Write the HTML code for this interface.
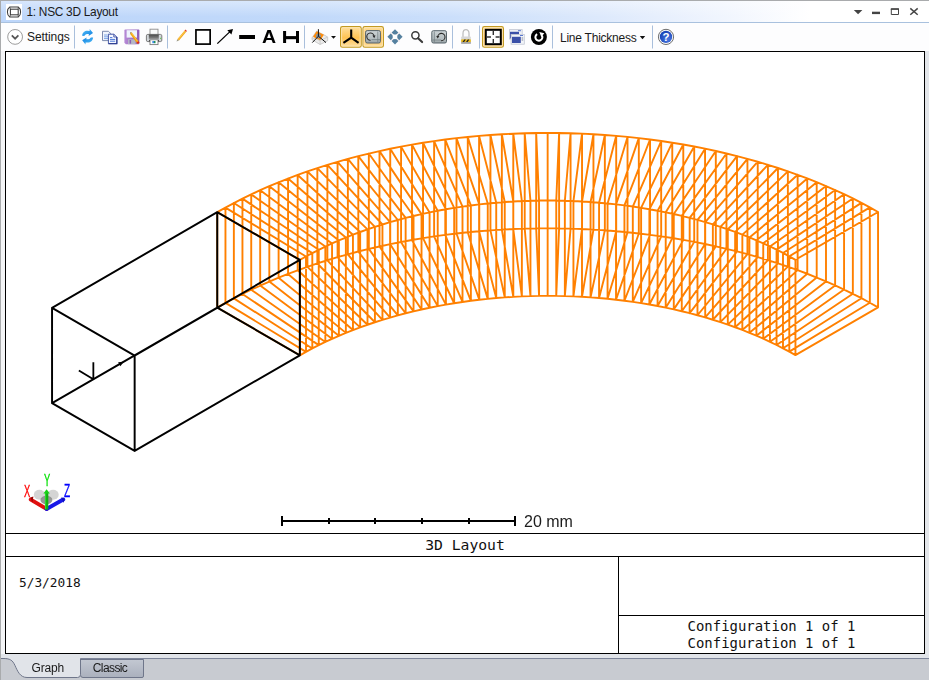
<!DOCTYPE html>
<html>
<head>
<meta charset="utf-8">
<title>1: NSC 3D Layout</title>
<style>
html,body{margin:0;padding:0;}
body{width:929px;height:680px;overflow:hidden;background:#fff;position:relative;font-family:"Liberation Sans",sans-serif;}
#win{position:absolute;left:0;top:0;width:929px;height:680px;overflow:hidden;background:#fff;}
#title{position:absolute;left:0;top:0;width:929px;height:22px;border-top:1px solid #a9abad;box-sizing:border-box;
 background:linear-gradient(to right,#bdd6fa 0px,#c1d9fa 300px,#cbdffb 450px,#dde9fc 600px,#f0f5fe 720px,#ffffff 810px);}
#title .shade{position:absolute;left:0;top:0;width:100%;height:21px;background:linear-gradient(to bottom,rgba(255,255,255,.4),rgba(255,255,255,0) 75%);}
#titleline{position:absolute;left:0;top:22px;width:929px;height:1px;background:#a9c1de;}
#ttext{position:absolute;left:26.5px;top:5px;font-size:11.9px;line-height:15px;color:#1a1a1a;white-space:nowrap;letter-spacing:-0.29px;}
#toolbar{position:absolute;left:0;top:23px;width:929px;height:28px;background:#fdfdfe;}
.tb{position:absolute;font-size:12px;line-height:15px;color:#1a1a1a;white-space:nowrap;}
#lborder{position:absolute;left:0;top:0;width:1px;height:680px;background:#a9abad;}
#rstrip{position:absolute;left:925px;top:51px;width:4px;height:607px;background:#e3e6ea;}
#lstrip{position:absolute;left:1px;top:51px;width:4px;height:607px;background:#f4f5f7;}
#bstrip{position:absolute;left:1px;top:654px;width:928px;height:4px;background:#e1e4e9;}
#tabs{position:absolute;left:0;top:658px;width:929px;height:22px;background:#c8cbd1;border-top:1px solid #7d859a;box-sizing:border-box;}
.mono{position:absolute;font-family:"DejaVu Sans Mono","Liberation Mono",monospace;color:#111;white-space:pre;}
svg{position:absolute;left:0;top:0;}
svg text{font-family:"Liberation Sans",sans-serif;}
.tabtxt{position:absolute;font-size:12px;line-height:15px;color:#1a1a1a;}
</style>
</head>
<body>
<div id="win">
 <div id="title"><div class="shade"></div></div>
 <div id="titleline"></div>
 <div id="ttext">1: NSC 3D Layout</div>
 <div id="toolbar"></div>
 <div class="tb" id="settings" style="left:27px;top:30px;letter-spacing:-0.08px;">Settings</div>
 <div class="tb" id="lthick" style="left:560px;top:31px;letter-spacing:-0.24px;">Line Thickness</div>
 <div id="lstrip"></div><div id="rstrip"></div><div id="bstrip"></div>
 <div id="tabs"></div>
 <div id="lborder"></div>

 <div class="mono" id="t3d" style="left:5px;width:920px;top:535.5px;text-align:center;font-size:14.7px;line-height:18px;">3D Layout</div>
 <div class="mono" id="tdate" style="left:19px;top:575px;font-size:12.8px;line-height:16px;">5/3/2018</div>
 <div class="mono" id="tc1" style="left:619px;width:305px;top:618.4px;text-align:center;font-size:13.95px;line-height:17px;">Configuration 1 of 1</div>
 <div class="mono" id="tc2" style="left:619px;width:305px;top:635.4px;text-align:center;font-size:13.95px;line-height:17px;">Configuration 1 of 1</div>

 <svg width="929" height="680" viewBox="0 0 929 680">
  <!-- frame -->
  <g fill="none" stroke="#000" stroke-width="1" shape-rendering="crispEdges">
   <rect x="5.5" y="51.5" width="919" height="602"/>
   <path d="M5 533.5H925M5 556.5H925M618.5 556V654M618 615.5H925"/>
  </g>
  
<path d="M217.25 212.20L225.46 207.57L233.86 203.05L242.45 198.65L251.23 194.38L260.18 190.23L269.31 186.21L278.60 182.32L288.06 178.57L297.67 174.95L307.43 171.47L317.34 168.12L327.39 164.92L337.57 161.86L347.87 158.95L358.30 156.19L368.84 153.57L379.49 151.10L390.24 148.79L401.08 146.63L412.01 144.62L423.03 142.77L434.12 141.08L445.27 139.54L456.49 138.16L467.77 136.95L479.09 135.89L490.45 134.99L501.85 134.26L513.28 133.69L524.72 133.28L536.18 133.03L547.65 132.94L559.12 133.02L570.58 133.26L582.02 133.67L593.45 134.23L604.85 134.96L616.21 135.85L627.53 136.90L638.81 138.11L650.03 139.48L661.18 141.01L672.27 142.70L683.29 144.54L694.22 146.54L705.06 148.69L715.81 151.00L726.46 153.46L737.00 156.07L747.43 158.83L757.73 161.74L767.91 164.79L777.96 167.98L787.87 171.32L797.63 174.80L807.24 178.41L816.70 182.16L825.99 186.04L835.12 190.06L844.07 194.20L852.85 198.47L861.44 202.86L869.84 207.37L878.05 212.00M217.25 307.55L225.46 302.92L233.86 298.40L242.45 294.00L251.23 289.73L260.18 285.58L269.31 281.56L278.60 277.67L288.06 273.92L297.67 270.30L307.43 266.82L317.34 263.47L327.39 260.27L337.57 257.21L347.87 254.30L358.30 251.54L368.84 248.92L379.49 246.45L390.24 244.14L401.08 241.98L412.01 239.97L423.03 238.12L434.12 236.43L445.27 234.89L456.49 233.51L467.77 232.30L479.09 231.24L490.45 230.34L501.85 229.61L513.28 229.04L524.72 228.63L536.18 228.38L547.65 228.29L559.12 228.37L570.58 228.61L582.02 229.02L593.45 229.58L604.85 230.31L616.21 231.20L627.53 232.25L638.81 233.46L650.03 234.83L661.18 236.36L672.27 238.05L683.29 239.89L694.22 241.89L705.06 244.04L715.81 246.35L726.46 248.81L737.00 251.42L747.43 254.18L757.73 257.09L767.91 260.14L777.96 263.33L787.87 266.67L797.63 270.15L807.24 273.76L816.70 277.51L825.99 281.39L835.12 285.41L844.07 289.55L852.85 293.82L861.44 298.21L869.84 302.72L878.05 307.35M299.85 259.95L306.01 256.47L312.31 253.09L318.75 249.79L325.33 246.58L332.05 243.47L338.89 240.46L345.86 237.54L352.95 234.73L360.16 232.01L367.49 229.40L374.92 226.89L382.45 224.49L390.09 222.20L397.82 220.01L405.64 217.94L413.54 215.98L421.53 214.13L429.59 212.39L437.72 210.77L445.92 209.27L454.18 207.88L462.50 206.61L470.87 205.46L479.28 204.42L487.74 203.51L496.23 202.72L504.75 202.05L513.30 201.49L521.87 201.06L530.45 200.76L539.05 200.57L547.65 200.51L556.25 200.57L564.85 200.75L573.43 201.05L582.00 201.47L590.55 202.02L599.07 202.69L607.56 203.47L616.02 204.38L624.43 205.41L632.80 206.56L641.12 207.82L649.38 209.20L657.58 210.70L665.71 212.32L673.77 214.05L681.76 215.90L689.66 217.85L697.48 219.92L705.21 222.10L712.85 224.39L720.38 226.79L727.81 229.29L735.14 231.90L742.35 234.61L749.44 237.42L756.41 240.33L763.25 243.34L769.97 246.45L776.55 249.65L782.99 252.94L789.29 256.33L795.45 259.80M299.85 355.30L306.01 351.82L312.31 348.44L318.75 345.14L325.33 341.93L332.05 338.82L338.89 335.81L345.86 332.89L352.95 330.08L360.16 327.36L367.49 324.75L374.92 322.24L382.45 319.84L390.09 317.55L397.82 315.36L405.64 313.29L413.54 311.33L421.53 309.48L429.59 307.74L437.72 306.12L445.92 304.62L454.18 303.23L462.50 301.96L470.87 300.81L479.28 299.77L487.74 298.86L496.23 298.07L504.75 297.40L513.30 296.84L521.87 296.41L530.45 296.11L539.05 295.92L547.65 295.86L556.25 295.92L564.85 296.10L573.43 296.40L582.00 296.82L590.55 297.37L599.07 298.04L607.56 298.82L616.02 299.73L624.43 300.76L632.80 301.91L641.12 303.17L649.38 304.55L657.58 306.05L665.71 307.67L673.77 309.40L681.76 311.25L689.66 313.20L697.48 315.27L705.21 317.45L712.85 319.74L720.38 322.14L727.81 324.64L735.14 327.25L742.35 329.96L749.44 332.77L756.41 335.68L763.25 338.69L769.97 341.80L776.55 345.00L782.99 348.29L789.29 351.68L795.45 355.15M217.25 212.20L299.85 259.95L299.85 355.30L217.25 307.55ZM225.46 207.57L306.01 256.47L306.01 351.82L225.46 302.92ZM233.86 203.05L312.31 253.09L312.31 348.44L233.86 298.40ZM242.45 198.65L318.75 249.79L318.75 345.14L242.45 294.00ZM251.23 194.38L325.33 246.58L325.33 341.93L251.23 289.73ZM260.18 190.23L332.05 243.47L332.05 338.82L260.18 285.58ZM269.31 186.21L338.89 240.46L338.89 335.81L269.31 281.56ZM278.60 182.32L345.86 237.54L345.86 332.89L278.60 277.67ZM288.06 178.57L352.95 234.73L352.95 330.08L288.06 273.92ZM297.67 174.95L360.16 232.01L360.16 327.36L297.67 270.30ZM307.43 171.47L367.49 229.40L367.49 324.75L307.43 266.82ZM317.34 168.12L374.92 226.89L374.92 322.24L317.34 263.47ZM327.39 164.92L382.45 224.49L382.45 319.84L327.39 260.27ZM337.57 161.86L390.09 222.20L390.09 317.55L337.57 257.21ZM347.87 158.95L397.82 220.01L397.82 315.36L347.87 254.30ZM358.30 156.19L405.64 217.94L405.64 313.29L358.30 251.54ZM368.84 153.57L413.54 215.98L413.54 311.33L368.84 248.92ZM379.49 151.10L421.53 214.13L421.53 309.48L379.49 246.45ZM390.24 148.79L429.59 212.39L429.59 307.74L390.24 244.14ZM401.08 146.63L437.72 210.77L437.72 306.12L401.08 241.98ZM412.01 144.62L445.92 209.27L445.92 304.62L412.01 239.97ZM423.03 142.77L454.18 207.88L454.18 303.23L423.03 238.12ZM434.12 141.08L462.50 206.61L462.50 301.96L434.12 236.43ZM445.27 139.54L470.87 205.46L470.87 300.81L445.27 234.89ZM456.49 138.16L479.28 204.42L479.28 299.77L456.49 233.51ZM467.77 136.95L487.74 203.51L487.74 298.86L467.77 232.30ZM479.09 135.89L496.23 202.72L496.23 298.07L479.09 231.24ZM490.45 134.99L504.75 202.05L504.75 297.40L490.45 230.34ZM501.85 134.26L513.30 201.49L513.30 296.84L501.85 229.61ZM513.28 133.69L521.87 201.06L521.87 296.41L513.28 229.04ZM524.72 133.28L530.45 200.76L530.45 296.11L524.72 228.63ZM536.18 133.03L539.05 200.57L539.05 295.92L536.18 228.38ZM547.65 132.94L547.65 200.51L547.65 295.86L547.65 228.29ZM559.12 133.02L556.25 200.57L556.25 295.92L559.12 228.37ZM570.58 133.26L564.85 200.75L564.85 296.10L570.58 228.61ZM582.02 133.67L573.43 201.05L573.43 296.40L582.02 229.02ZM593.45 134.23L582.00 201.47L582.00 296.82L593.45 229.58ZM604.85 134.96L590.55 202.02L590.55 297.37L604.85 230.31ZM616.21 135.85L599.07 202.69L599.07 298.04L616.21 231.20ZM627.53 136.90L607.56 203.47L607.56 298.82L627.53 232.25ZM638.81 138.11L616.02 204.38L616.02 299.73L638.81 233.46ZM650.03 139.48L624.43 205.41L624.43 300.76L650.03 234.83ZM661.18 141.01L632.80 206.56L632.80 301.91L661.18 236.36ZM672.27 142.70L641.12 207.82L641.12 303.17L672.27 238.05ZM683.29 144.54L649.38 209.20L649.38 304.55L683.29 239.89ZM694.22 146.54L657.58 210.70L657.58 306.05L694.22 241.89ZM705.06 148.69L665.71 212.32L665.71 307.67L705.06 244.04ZM715.81 151.00L673.77 214.05L673.77 309.40L715.81 246.35ZM726.46 153.46L681.76 215.90L681.76 311.25L726.46 248.81ZM737.00 156.07L689.66 217.85L689.66 313.20L737.00 251.42ZM747.43 158.83L697.48 219.92L697.48 315.27L747.43 254.18ZM757.73 161.74L705.21 222.10L705.21 317.45L757.73 257.09ZM767.91 164.79L712.85 224.39L712.85 319.74L767.91 260.14ZM777.96 167.98L720.38 226.79L720.38 322.14L777.96 263.33ZM787.87 171.32L727.81 229.29L727.81 324.64L787.87 266.67ZM797.63 174.80L735.14 231.90L735.14 327.25L797.63 270.15ZM807.24 178.41L742.35 234.61L742.35 329.96L807.24 273.76ZM816.70 182.16L749.44 237.42L749.44 332.77L816.70 277.51ZM825.99 186.04L756.41 240.33L756.41 335.68L825.99 281.39ZM835.12 190.06L763.25 243.34L763.25 338.69L835.12 285.41ZM844.07 194.20L769.97 246.45L769.97 341.80L844.07 289.55ZM852.85 198.47L776.55 249.65L776.55 345.00L852.85 293.82ZM861.44 202.86L782.99 252.94L782.99 348.29L861.44 298.21ZM869.84 207.37L789.29 256.33L789.29 351.68L869.84 302.72ZM878.05 212.00L795.45 259.80L795.45 355.15L878.05 307.35Z" fill="none" stroke="#ff8000" stroke-width="1.9" stroke-linejoin="round"/>
<path d="M52.05 307.80L134.65 355.55L134.65 450.90L52.05 403.15ZM217.25 212.20L299.85 259.95L299.85 355.30L217.25 307.55ZM52.05 307.80L217.25 212.20M134.65 355.55L299.85 259.95M134.65 450.90L299.85 355.30M52.05 403.15L217.25 307.55" fill="none" stroke="#000" stroke-width="1.95" stroke-linejoin="round"/>
<path d="M93.35 379.35 L93.35 362.15 M93.35 379.35 L78.85 370.45" fill="none" stroke="#000" stroke-width="1.8"/>
<path d="M123.58 361.85 L120.41 366.34 L118.10 362.36 Z" fill="#000"/>

  <!-- scale bar -->
  <g stroke="#000" stroke-width="2" fill="none" shape-rendering="crispEdges">
   <path d="M281 521H516M282 516V526M515 516V526M328.5 518V524M375 518V524M421.5 518V524M468.5 518V524"/>
  </g>
  
  <g>
 <ellipse cx="39.4" cy="494.8" rx="5.6" ry="5" fill="#cfcfcf" fill-opacity="0.9"/>
 <ellipse cx="53.1" cy="494.8" rx="5.6" ry="5" fill="#cfcfcf" fill-opacity="0.9"/>
 <ellipse cx="46.4" cy="500" rx="6" ry="4.2" fill="#8c8c8c" fill-opacity="0.9"/>
 <path d="M46.6 508.9L30.8 499.6" stroke="#e01010" stroke-width="4" stroke-linecap="round"/>
 <path d="M46.6 508.9L63.2 499.6" stroke="#1818e8" stroke-width="4" stroke-linecap="round"/>
 <path d="M30.4 497.6L33.4 496.6L32.4 502.2Z" fill="#900"/>
 <path d="M61 497.6L64.4 498.2L63.8 503Z" fill="#1010c0"/>
 <path d="M46.6 509.6V493" stroke="#10b010" stroke-width="3.4"/>
 <path d="M45.6 509V493" stroke="#30e030" stroke-width="1"/>
 <path d="M43.4 493.4L46.6 489.2L49.8 493.4Z" fill="#18d018"/>

</g>

  <defs>
 <linearGradient id="gbtn" x1="0" y1="0" x2="0" y2="1">
  <stop offset="0" stop-color="#ffe0a0"/><stop offset="0.45" stop-color="#ffc860"/><stop offset="0.55" stop-color="#ffc252"/><stop offset="1" stop-color="#ffe2a6"/>
 </linearGradient>
 <linearGradient id="gblue" x1="0" y1="0" x2="1" y2="1">
  <stop offset="0" stop-color="#56c0f8"/><stop offset="1" stop-color="#0f7fe0"/>
 </linearGradient>
 <linearGradient id="ggray" x1="0" y1="0" x2="0" y2="1">
  <stop offset="0" stop-color="#cdd4d6"/><stop offset="0.7" stop-color="#b3bcbf"/><stop offset="1" stop-color="#98a2a5"/>
 </linearGradient>
 <linearGradient id="gpurp" x1="0" y1="0" x2="1" y2="0">
  <stop offset="0" stop-color="#b78ad6"/><stop offset="1" stop-color="#8d5cb8"/>
 </linearGradient>
 <linearGradient id="gprn" x1="0" y1="0" x2="0" y2="1">
  <stop offset="0" stop-color="#4a4a4a"/><stop offset="1" stop-color="#8a8a8a"/>
 </linearGradient>
 <radialGradient id="ghelp" cx="0.65" cy="0.7" r="0.8">
  <stop offset="0" stop-color="#4a78e0"/><stop offset="1" stop-color="#123cb0"/>
 </radialGradient>
 <linearGradient id="gtab" x1="0" y1="0" x2="0" y2="1">
  <stop offset="0" stop-color="#c3c8d2"/><stop offset="1" stop-color="#aab0bd"/>
 </linearGradient>
</defs>
<!-- title icon -->
<rect x="6" y="4" width="16" height="16" fill="#fff"/>
<g fill="none" stroke="#3c3c3c" stroke-width="1.05">
 <path d="M9.8 7 H18.2 C20 8.2 20.6 10 20.6 12 C20.6 14 20 15.8 18.2 17 H9.8 C8 15.8 7.4 14 7.4 12 C7.4 10 8 8.2 9.8 7 Z"/>
 <rect x="10.4" y="9.2" width="7.8" height="5.6"/>
 <path d="M9.8 7L10.4 9.2M18.2 7L18.2 9.2M9.8 17L10.4 14.8M18.2 17L18.2 14.8" stroke-width="0.7"/>
</g>
<!-- window buttons -->
<path d="M853.8 10H862.4L858.1 14.3Z" fill="#444"/>
<rect x="872" y="11.7" width="8" height="2.4" fill="#444"/>
<path d="M891.3 9H898.5V14.5H891.3Z" fill="none" stroke="#444" stroke-width="1"/>
<rect x="890.8" y="8.3" width="8.2" height="1.5" fill="#444"/>
<path d="M910.3 8.4L917.7 14.8M917.7 8.4L910.3 14.8" stroke="#444" stroke-width="1.5" fill="none"/>
<!-- settings -->
<circle cx="15.1" cy="36.9" r="7.4" fill="#fff" stroke="#9c9c9c" stroke-width="1"/>
<path d="M11.8 35.4L15.1 38.7L18.4 35.4" fill="none" stroke="#555" stroke-width="1.7"/>
<!-- separators -->
<path d="M74.5 25.5V48.5M167.5 25.5V48.5M304.5 25.5V48.5M452.5 25.5V48.5M479.5 25.5V48.5M552.5 25.5V48.5M652.5 25.5V48.5" stroke="#a9bfdc" stroke-width="1" fill="none"/>
<!-- refresh -->
<g fill="url(#gblue)">
 <path d="M82.1 35.8C82.3 32.8 84.6 30.8 87.4 30.8L89.6 31L89.7 29L93 33.1L88.6 35.9L88.9 34.2C86.9 33.9 85.3 34.4 84.3 36Z"/>
 <path d="M82.1 35.8C82.3 32.8 84.6 30.8 87.4 30.8L89.6 31L89.7 29L93 33.1L88.6 35.9L88.9 34.2C86.9 33.9 85.3 34.4 84.3 36Z" transform="rotate(180 87.6 36.7)"/>
</g>
<!-- copy -->
<g>
 <path d="M102.5 31.3H108.4L111.2 34V40.6H102.5Z" fill="#f1f5fd" stroke="#6f7fa6" stroke-width="0.9"/>
 <path d="M104 35H107.5M104 36.8H109M104 38.6H109" stroke="#7ea6e6" stroke-width="1"/>
 <path d="M108.4 34.2H113.8L116.8 37V43.6H108.4Z" fill="#f6f8ff" stroke="#33479f" stroke-width="0.9"/>
 <path d="M108.4 43.7H116.9V37" stroke="#24368c" stroke-width="1.1" fill="none"/>
 <path d="M113.8 34.2V37H116.8" fill="none" stroke="#2b3f9c" stroke-width="0.8"/>
 <path d="M110 37.6H112.4M110 39.4H115.2M110 41.2H115.2" stroke="#4c78d8" stroke-width="1"/>
</g>
<!-- save as -->
<g>
 <path d="M124.4 30.4Q124.4 29.6 125.2 29.6H138.6Q139.4 29.6 139.4 30.4V43.4Q139.4 44.2 138.6 44.2H125.9L124.4 42.7Z" fill="url(#gpurp)"/>
 <rect x="126.6" y="30.2" width="10.4" height="7.4" fill="#eef3fc"/>
 <rect x="128" y="39.3" width="7.6" height="4.9" fill="#b4b6c6"/>
 <rect x="129.6" y="40" width="1.5" height="3.6" fill="#8a60b4"/>
 <path d="M130.4 32.3L131.8 32.6L139.3 42.3L137.6 43.9L130.2 34Z" fill="#f5a30a"/>
 <path d="M131.2 32.6L138.6 42.8" stroke="#ffd35a" stroke-width="0.7"/>
 <path d="M130.2 32.1L131.6 32.6L130.5 33.9Z" fill="#8a8a8a"/>
 <path d="M138.2 41L139.5 42.5L137.8 44.1L136.6 42.6Z" fill="#d8281e"/>
</g>
<!-- printer -->
<g>
 <rect x="150" y="29.2" width="8" height="6" fill="#fafafa" stroke="#8c8c8c" stroke-width="0.9"/>
 <rect x="146.4" y="34.4" width="15.4" height="7.2" rx="1.4" fill="#d2d6da" stroke="#6e6e6e" stroke-width="0.9"/>
 <rect x="148.8" y="34.6" width="10" height="4.3" fill="url(#gprn)"/>
 <rect x="150" y="39.8" width="8" height="4.8" fill="#fff" stroke="#7c7c7c" stroke-width="0.9"/>
 <rect x="152.4" y="41" width="1.5" height="2.2" fill="#2a7fe0"/><rect x="154" y="41" width="1.5" height="2.2" fill="#1f8f5a"/>
 <rect x="160" y="37.8" width="1.1" height="1.1" fill="#5fd24a"/>
 <path d="M148.9 41.2L149.5 39.6L150 41.2ZM158 41.2L158.5 39.6L159.1 41.2Z" fill="#222"/>
</g>
<!-- pencil -->
<g>
 <path d="M177.3 39.2L184.6 30.4L186.3 31.8L179 40.6Z" fill="#f4a81c"/>
 <path d="M178 39.6L185.2 31" stroke="#ffd768" stroke-width="0.7"/>
 <path d="M184.6 30.4L185.3 29.6L187 31L186.3 31.8Z" fill="#e0352a"/>
 <path d="M177.3 39.2L179 40.6L176.5 41.6Z" fill="#9a9a8a"/>
</g>
<!-- square -->
<rect x="195.95" y="29.9" width="14.2" height="14.2" fill="#fff" stroke="#000" stroke-width="1.7"/>
<!-- arrow -->
<path d="M217.3 43.6L230 31.6" stroke="#000" stroke-width="1.3" fill="none"/>
<path d="M233 28.9L231.4 34.4L227.3 30.2Z" fill="#000"/>
<!-- thick line -->
<rect x="239.2" y="35" width="15.8" height="4" fill="#000"/>
<!-- H dimension -->
<path d="M284.6 31V43M297.5 31V43" stroke="#000" stroke-width="3" fill="none"/>
<rect x="284" y="36.1" width="14" height="3.1" fill="#000"/>
<!-- 3d view -->
<g>
 <path d="M312 37.8L316.6 31.2L323.9 34.8L327.7 37.1V40.7L320.1 44.5L312 39.7Z" fill="#ececec" stroke="#c2c2c2" stroke-width="0.8"/>
 <path d="M316.6 31.2L323.9 34.8L320.1 40.4L313 36.7Z" fill="#ff8c0a"/>
 <path d="M320.1 40.4V44.5M320.1 40.4L327.7 37.1M320.1 40.4L312 37.8" stroke="#c8c8c8" stroke-width="0.8" fill="none"/>
 <circle cx="318.4" cy="36" r="2.5" fill="#8a949e"/>
 <path d="M318.4 36.2V29.2M318.4 36.2L312.3 42.6M318.4 36.2L326 42.6" stroke="#111" stroke-width="1" fill="none"/>
 <path d="M331 35.9H336L333.5 38.8Z" fill="#111"/>
</g>
<!-- highlighted buttons -->
<g>
 <rect x="340.6" y="26.6" width="20.6" height="20.6" rx="1.8" fill="url(#gbtn)" stroke="#c39a22" stroke-width="1.2"/>
 <rect x="363" y="26.6" width="20.4" height="20.6" rx="1.8" fill="url(#gbtn)" stroke="#c39a22" stroke-width="1.2"/>
 <rect x="482.6" y="26.6" width="20.8" height="20.6" rx="1.8" fill="url(#gbtn)" stroke="#c39a22" stroke-width="1.2"/>
 <rect x="341.6" y="27.6" width="18.6" height="18.6" rx="1" fill="none" stroke="#ffeac0" stroke-width="0.8"/>
 <rect x="364" y="27.6" width="18.4" height="18.6" rx="1" fill="none" stroke="#ffeac0" stroke-width="0.8"/>
 <rect x="483.6" y="27.6" width="18.8" height="18.6" rx="1" fill="none" stroke="#ffeac0" stroke-width="0.8"/>
</g>
<!-- axes icon -->
<path d="M351.2 29.4V37.7L343.4 42.8M351.2 37.7L358.6 42.8" stroke="#000" stroke-width="2.1" fill="none"/>
<!-- rotate icon -->
<g>
 <rect x="365.6" y="30.6" width="14.8" height="12.4" rx="1.6" fill="url(#ggray)" stroke="#56636a" stroke-width="1"/>
 <path d="M377.8 31.5V42M371.5 39.6H380" stroke="#6d787c" stroke-width="0.7" fill="none"/>
 <path d="M370.6 40.2A3.6 3.6 0 1 1 374 36.4" fill="none" stroke="#2c2c2c" stroke-width="1.1"/>
 <path d="M372.4 35.6H375.6L374.2 38.2Z" fill="#2c2c2c"/>
</g>
<!-- pan icon -->
<g>
 <path d="M395 29.2L402.6 36.8L395 44.4L387.4 36.8Z" fill="#55809f"/>
 <path d="M390.2 32L399.8 41.6M399.8 32L390.2 41.6" stroke="#f8eef0" stroke-width="1.3"/>
 <rect x="392.7" y="34.5" width="4.6" height="4.6" fill="#fff"/>
</g>
<!-- magnifier -->
<circle cx="415.4" cy="35.3" r="3.6" fill="none" stroke="#3a3a3a" stroke-width="1.5"/>
<path d="M418.1 38.2L422.1 42.1" stroke="#3a3a3a" stroke-width="2.1" stroke-linecap="round"/>
<!-- reset icon -->
<g>
 <rect x="431.8" y="30.7" width="14.7" height="12.3" rx="1.6" fill="url(#ggray)" stroke="#56636a" stroke-width="1"/>
 <path d="M434.3 31.5V42M432.5 40H441" stroke="#6d787c" stroke-width="0.7" fill="none"/>
 <path d="M441.2 40.6A3.6 3.6 0 1 0 437.8 36.8" fill="none" stroke="#2c2c2c" stroke-width="1.1"/>
 <path d="M436.2 36H439.4L437.7 38.6Z" fill="#2c2c2c"/>
</g>
<!-- lock -->
<g>
 <path d="M463 37V33.2A3 3.6 0 0 1 469 33.2V37" fill="none" stroke="#bdbdbd" stroke-width="1.25"/>
 <rect x="461.2" y="36.4" width="9.6" height="7.4" rx="0.8" fill="#d6d6d6"/>
 <rect x="461.2" y="39.4" width="9.6" height="2.6" fill="#e8b81a"/>
 <path d="M462.5 42L464.3 39.4H465.9L464.1 42ZM466 42L467.8 39.4H469.4L467.6 42Z" fill="#222"/>
 <rect x="461.2" y="42" width="9.6" height="1.8" fill="#a6a6a6"/>
</g>
<!-- fit icon -->
<rect x="485.8" y="29.8" width="15" height="14.4" fill="#fff" stroke="#000" stroke-width="2"/>
<path d="M493.3 31V35M493.3 39V43M487 37H491M495.6 37H499.6" stroke="#333" stroke-width="1.4" fill="none"/>
<!-- windows icon -->
<g>
 <rect x="509.4" y="29.6" width="12.8" height="9.4" fill="#eef0f6" stroke="#c2c7d4" stroke-width="0.8"/>
 <rect x="510" y="31.8" width="9" height="6.6" fill="#3b50a8"/>
 <rect x="518" y="30.2" width="3" height="1" fill="#5a78d0"/>
 <rect x="511.1" y="34.4" width="13.2" height="9.8" fill="#f2f4f8" stroke="#c2c7d4" stroke-width="0.8"/>
 <rect x="512" y="36.8" width="8.8" height="6.2" fill="#3b50a8"/>
 <rect x="521.6" y="37" width="1.6" height="4" fill="#b8bcc8"/>
 <rect x="520" y="35" width="3" height="1" fill="#5a78d0"/>
</g>
<!-- black circle reset -->
<g>
 <circle cx="538.9" cy="37" r="8" fill="#000"/>
 <path d="M537.15 34.17A3.5 3.5 0 1 0 541.93 35.45" fill="none" stroke="#fff" stroke-width="2"/>
 <path d="M539.3 32L544.3 33.3L541.3 37Z" fill="#fff"/>
</g>
<!-- dropdown arrow -->
<path d="M639.8 36.1H645.2L642.5 39.2Z" fill="#111"/>
<!-- help -->
<g>
 <circle cx="666" cy="36.9" r="7.6" fill="#fff" stroke="#6c6c6c" stroke-width="1"/>
 <circle cx="666" cy="36.9" r="6.2" fill="url(#ghelp)"/>
 <text x="666" y="41" font-size="11.5" font-weight="bold" fill="#fff" text-anchor="middle">?</text>
</g>


  <path d="M1 658.5H929" stroke="#7d859a" stroke-width="1" fill="none"/>
<path d="M80.5 659.5H143.5V676Q143.5 677.5 142 677.5H83Q80.5 677.5 80.5 675Z" fill="url(#gtab)" stroke="#6f768a" stroke-width="1"/>
<path d="M1 657.6H80.5V674.5Q80.5 677.5 77.5 677.5H27C20 677.5 17.5 671 15 665.5C12.5 660 10 658.5 3 658.5H1Z" fill="#e1e4e9"/>
<path d="M1 658.5H3C10 658.5 12.5 660 15 665.5C17.5 671 20 677.5 27 677.5H77.5Q80.5 677.5 80.5 674.5V658.5" fill="none" stroke="#6f768a" stroke-width="1"/>

 </svg>
<svg width="929" height="680" viewBox="0 0 929 680" style="will-change:transform;pointer-events:none;">
 <text x="24" y="496.8" font-size="16" fill="#ff0000" stroke="#ff0000" stroke-width="0.35" textLength="6.2" lengthAdjust="spacingAndGlyphs">X</text>
 <text x="43.9" y="485.6" font-size="16" fill="#00e000" stroke="#00e000" stroke-width="0.35" textLength="6.2" lengthAdjust="spacingAndGlyphs">Y</text>
 <text x="63.9" y="496.8" font-size="17.6" fill="#0000ff" stroke="#0000ff" stroke-width="0.35" textLength="6.2" lengthAdjust="spacingAndGlyphs">Z</text>
<text x="261.9" y="43.4" font-size="18.4" font-weight="bold" fill="#000" textLength="14.1" lengthAdjust="spacingAndGlyphs">A</text>
<text x="524" y="527" font-size="16" fill="#1c1c1c">20 mm</text>
 </svg>
 <div class="tabtxt" style="left:31.6px;top:661px;letter-spacing:-0.2px;">Graph</div>
 <div class="tabtxt" style="left:92.8px;top:661px;letter-spacing:-0.6px;">Classic</div>
</div>
</body>
</html>
